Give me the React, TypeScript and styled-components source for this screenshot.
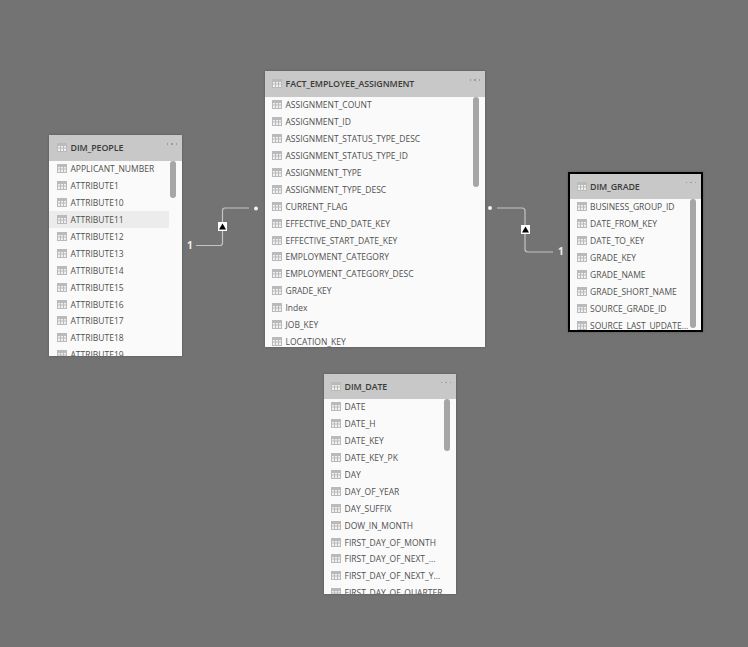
import React from "react";
import styled, { createGlobalStyle } from "styled-components";

const GlobalStyle = createGlobalStyle`
  html, body {
    margin: 0;
    padding: 0;
    background: #737373;
  }
`;

interface TableData {
  name: string;
  x: number;
  y: number;
  width: number;
  height: number;
  inset: number;
  headerHeight: number;
  selected?: boolean;
  thumbTop: number;
  thumbHeight: number;
  hovered?: string;
  columns: string[];
}

const tables: TableData[] = [
  {
    name: "DIM_PEOPLE",
    x: 49,
    y: 135,
    width: 133,
    height: 221,
    inset: 8,
    headerHeight: 26,
    thumbTop: 26,
    thumbHeight: 37,
    hovered: "ATTRIBUTE11",
    columns: [
      "APPLICANT_NUMBER",
      "ATTRIBUTE1",
      "ATTRIBUTE10",
      "ATTRIBUTE11",
      "ATTRIBUTE12",
      "ATTRIBUTE13",
      "ATTRIBUTE14",
      "ATTRIBUTE15",
      "ATTRIBUTE16",
      "ATTRIBUTE17",
      "ATTRIBUTE18",
      "ATTRIBUTE19",
    ],
  },
  {
    name: "FACT_EMPLOYEE_ASSIGNMENT",
    x: 265,
    y: 71,
    width: 220,
    height: 276,
    inset: 7,
    headerHeight: 26,
    thumbTop: 26,
    thumbHeight: 90,
    columns: [
      "ASSIGNMENT_COUNT",
      "ASSIGNMENT_ID",
      "ASSIGNMENT_STATUS_TYPE_DESC",
      "ASSIGNMENT_STATUS_TYPE_ID",
      "ASSIGNMENT_TYPE",
      "ASSIGNMENT_TYPE_DESC",
      "CURRENT_FLAG",
      "EFFECTIVE_END_DATE_KEY",
      "EFFECTIVE_START_DATE_KEY",
      "EMPLOYMENT_CATEGORY",
      "EMPLOYMENT_CATEGORY_DESC",
      "GRADE_KEY",
      "Index",
      "JOB_KEY",
      "LOCATION_KEY",
    ],
  },
  {
    name: "DIM_GRADE",
    x: 568,
    y: 172,
    width: 135,
    height: 160,
    inset: 6.5,
    headerHeight: 25,
    selected: true,
    thumbTop: 25,
    thumbHeight: 129,
    columns: [
      "BUSINESS_GROUP_ID",
      "DATE_FROM_KEY",
      "DATE_TO_KEY",
      "GRADE_KEY",
      "GRADE_NAME",
      "GRADE_SHORT_NAME",
      "SOURCE_GRADE_ID",
      "SOURCE_LAST_UPDATE...",
    ],
  },
  {
    name: "DIM_DATE",
    x: 324,
    y: 374,
    width: 132,
    height: 220,
    inset: 7,
    headerHeight: 25,
    thumbTop: 25,
    thumbHeight: 52,
    columns: [
      "DATE",
      "DATE_H",
      "DATE_KEY",
      "DATE_KEY_PK",
      "DAY",
      "DAY_OF_YEAR",
      "DAY_SUFFIX",
      "DOW_IN_MONTH",
      "FIRST_DAY_OF_MONTH",
      "FIRST_DAY_OF_NEXT_...",
      "FIRST_DAY_OF_NEXT_Y...",
      "FIRST_DAY_OF_QUARTER",
    ],
  },
];

const Canvas = styled.div`
  position: relative;
  width: 748px;
  height: 647px;
  overflow: hidden;
  background: #737373;
  font-family: "Open Sans", "Noto Sans", sans-serif;
`;

// Tables sit on a free canvas, so their place comes from the data
const Card = styled.div<{ $selected?: boolean }>`
  position: absolute;
  display: flex;
  flex-direction: column;
  box-sizing: border-box;
  overflow: hidden;
  background: #fafafa;
  border: ${({ $selected }) => ($selected ? "2px solid #000" : "0")};
  box-shadow: 0 0 2px rgba(60, 60, 60, 0.5);
`;

const Header = styled.div<{ $inset: number; $height: number }>`
  flex: none;
  display: flex;
  align-items: center;
  box-sizing: border-box;
  height: ${({ $height }) => $height}px;
  padding: 0 5px 1px ${({ $inset }) => $inset}px;
  gap: 3.5px;
  background: #c8c8c8;
  color: #3b3b3b;
  font-size: 8.9px;
  font-weight: 600;
  letter-spacing: -0.1px;
`;

const Title = styled.span`
  flex: 1;
  white-space: nowrap;
`;

const More = styled.span`
  display: flex;
  gap: 3px;
  margin-top: -7px;
`;

const Dot = styled.i`
  width: 1.5px;
  height: 1.5px;
  background: #9c9c9c;
`;

const Rows = styled.div`
  flex: 1;
  min-height: 0;
  margin-top: -0.5px;
  overflow: hidden;
`;

const Row = styled.div<{ $hovered?: boolean; $inset: number }>`
  display: flex;
  align-items: center;
  gap: 3.5px;
  height: 16.9px;
  width: calc(100% - 13px);
  padding-left: ${({ $inset }) => $inset}px;
  box-sizing: border-box;
  background: ${({ $hovered }) => ($hovered ? "#ececec" : "transparent")};
  color: #505050;
  font-size: 8.5px;
  white-space: nowrap;
`;

const Thumb = styled.div<{ $selected?: boolean }>`
  position: absolute;
  right: ${({ $selected }) => ($selected ? 5 : 6)}px;
  width: 6px;
  border-radius: 3px;
  background: #a6a6a6;
`;

const Wire = styled.svg`
  position: absolute;
  left: 0;
  top: 0;
  pointer-events: none;
`;

const One = styled.span<{ $left: number; $top: number }>`
  position: absolute;
  left: ${({ $left }) => $left}px;
  top: ${({ $top }) => $top}px;
  color: #f0f0f0;
  font-size: 10px;
  font-weight: 700;
`;

const TableIcon: React.FC = () => (
  <svg width="10" height="9" viewBox="0 0 10 9" style={{ flex: "none" }}>
    <rect x="0" y="0" width="10" height="9" fill="#bababa" />
    <path d="M1 3h2v1.5H1zM4 3h2v1.5H4zM7 3h2v1.5H7zM1 5.5h2V8H1zM4 5.5h2V8H4zM7 5.5h2V8H7z" fill="#f0f0f0" />
  </svg>
);

const Table: React.FC<{ table: TableData }> = ({ table }) => (
  <Card
    $selected={table.selected}
    style={{ left: table.x, top: table.y, width: table.width, height: table.height }}
  >
    <Header $inset={table.inset} $height={table.headerHeight}>
      <TableIcon />
      <Title>{table.name}</Title>
      <More>
        <Dot />
        <Dot />
        <Dot />
      </More>
    </Header>
    <Rows>
      {table.columns.map((column) => (
        <Row key={column} $inset={table.inset} $hovered={column === table.hovered}>
          <TableIcon />
          {column}
        </Row>
      ))}
    </Rows>
    <Thumb $selected={table.selected} style={{ top: table.thumbTop, height: table.thumbHeight }} />
  </Card>
);

const Arrow: React.FC<{ x: number; y: number }> = ({ x, y }) => (
  <g>
    <rect x={x} y={y} width="9" height="9" fill="#fff" />
    <path d={`M${x + 4.5} ${y + 1.5}L${x + 8} ${y + 7.5}H${x + 1}Z`} fill="#000" />
  </g>
);

const Connectors: React.FC = () => (
  <Wire width="748" height="647">
    <g fill="none" stroke="#c4c4c4" strokeWidth="1.2">
      <path d="M196 245.5H220Q222.5 245.5 222.5 243V210.5Q222.5 208 225 208H249" />
      <path d="M497 208H522Q525 208 525 211V249Q525 252 528 252H553" />
    </g>
    <Arrow x={218} y={222} />
    <Arrow x={521} y={225} />
    <circle cx="256" cy="208.5" r="2" fill="#f2f2f2" />
    <circle cx="490" cy="208" r="2" fill="#f2f2f2" />
  </Wire>
);

const App: React.FC = () => (
  <>
    <GlobalStyle />
    <Canvas>
      {tables.map((table) => (
        <Table key={table.name} table={table} />
      ))}
      <Connectors />
      <One $left={187} $top={238}>1</One>
      <One $left={558} $top={244}>1</One>
    </Canvas>
  </>
);

export default App;
